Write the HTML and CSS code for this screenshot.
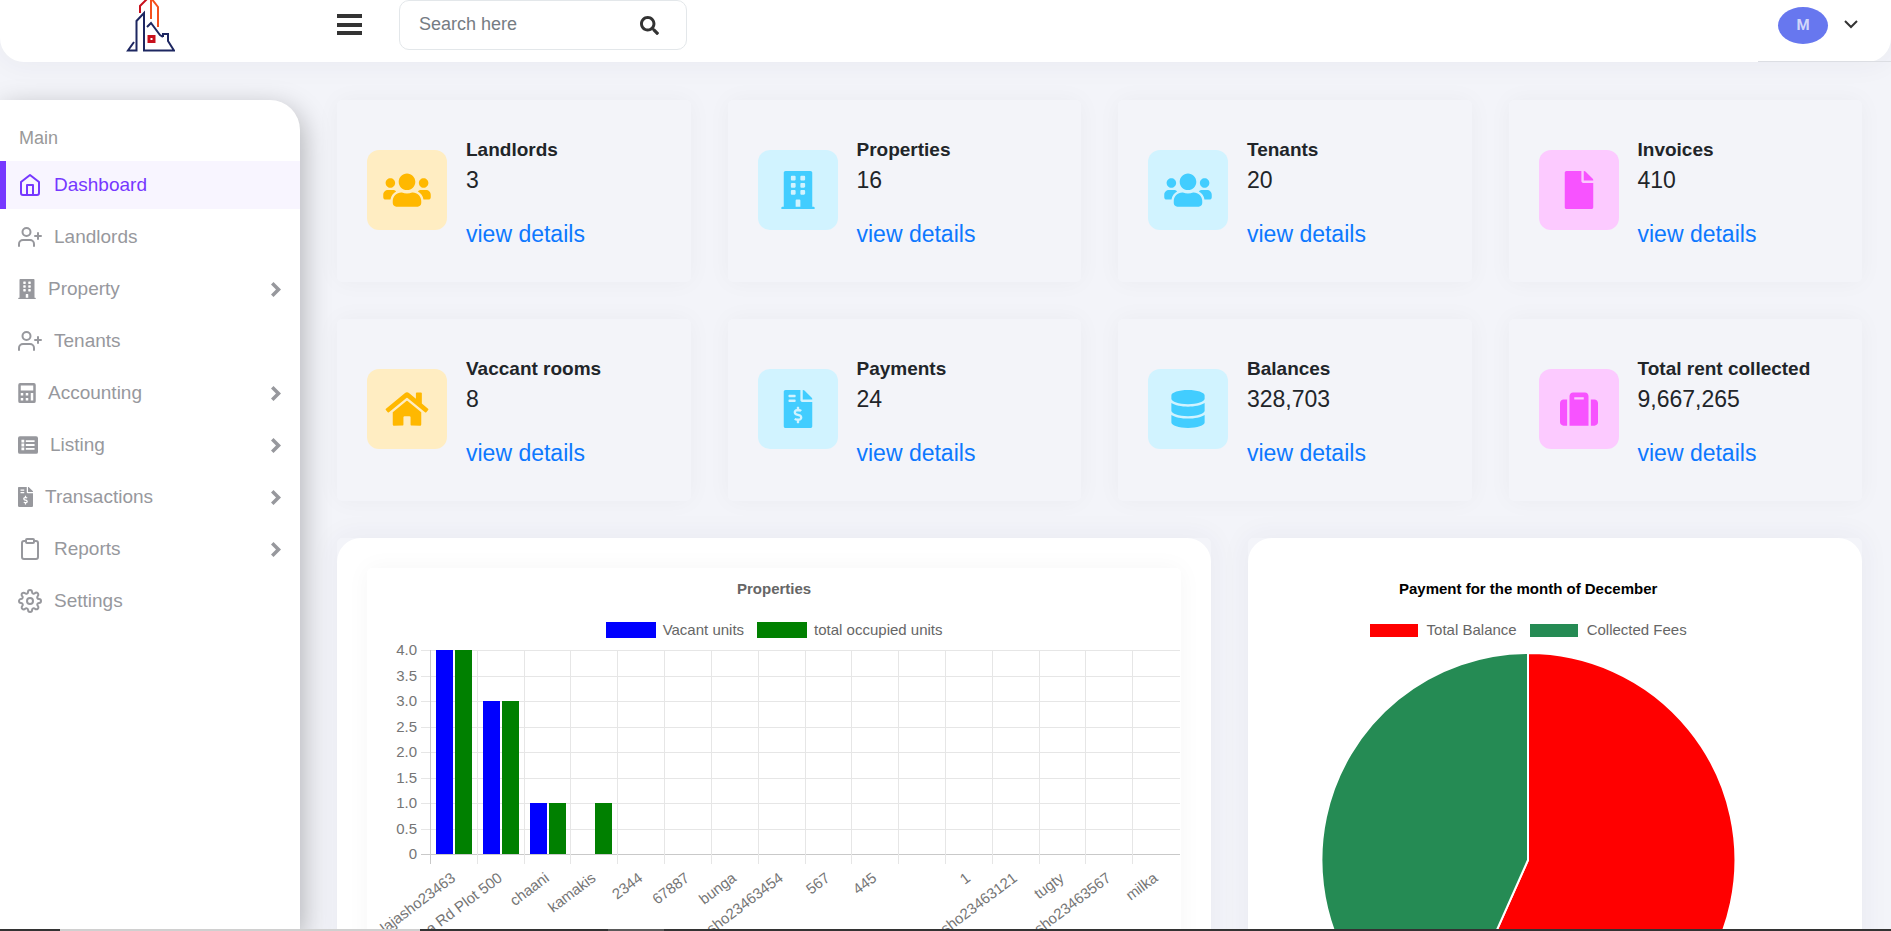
FILE: index.html
```html
<!DOCTYPE html>
<html lang="en">
	<head>
		<meta charset="utf-8">
		<title>Dashboard</title>
		<link rel="stylesheet" href="styles.css">
	</head>
	<body>

		<!-- shared icons -->
		<svg class="sprite" aria-hidden="true">
			<symbol id="home" viewBox="0 0 24 24"><path d="M3 9l9-7 9 7v11a2 2 0 0 1-2 2H5a2 2 0 0 1-2-2z"/><path d="M9 22V12h6v10"/></symbol>
			<symbol id="user-plus" viewBox="0 0 24 24"><path d="M16 21v-2a4 4 0 0 0-4-4H5a4 4 0 0 0-4 4v2"/><circle cx="8.500" cy="7" r="4"/><path d="M20 8v6M23 11h-6"/></symbol>
			<symbol id="clipboard" viewBox="0 0 24 24"><path d="M16 4h2a2 2 0 0 1 2 2v14a2 2 0 0 1-2 2H6a2 2 0 0 1-2-2V6a2 2 0 0 1 2-2h2"/><rect x="8" y="2" width="8" height="4" rx="1"/></symbol>
			<symbol id="settings" viewBox="0 0 24 24"><circle cx="12" cy="12" r="3"/><path d="M19.4 15a1.65 1.65 0 0 0 .33 1.82l.06.06a2 2 0 0 1 0 2.83 2 2 0 0 1-2.83 0l-.06-.06a1.65 1.65 0 0 0-1.82-.33 1.65 1.65 0 0 0-1 1.51V21a2 2 0 0 1-2 2 2 2 0 0 1-2-2v-.09A1.65 1.65 0 0 0 9 19.4a1.65 1.65 0 0 0-1.82.33l-.06.06a2 2 0 0 1-2.83 0 2 2 0 0 1 0-2.83l.06-.06a1.65 1.65 0 0 0 .33-1.82 1.65 1.65 0 0 0-1.51-1H3a2 2 0 0 1-2-2 2 2 0 0 1 2-2h.09A1.65 1.65 0 0 0 4.6 9a1.65 1.65 0 0 0-.33-1.82l-.06-.06a2 2 0 0 1 0-2.83 2 2 0 0 1 2.83 0l.06.06a1.65 1.65 0 0 0 1.82.33H9a1.65 1.65 0 0 0 1-1.51V3a2 2 0 0 1 2-2 2 2 0 0 1 2 2v.09a1.65 1.65 0 0 0 1 1.51 1.65 1.65 0 0 0 1.82-.33l.06-.06a2 2 0 0 1 2.83 0 2 2 0 0 1 0 2.83l-.06.06a1.65 1.65 0 0 0-.33 1.82V9a1.65 1.65 0 0 0 1.51 1H21a2 2 0 0 1 2 2 2 2 0 0 1-2 2h-.09a1.65 1.65 0 0 0-1.51 1z"/></symbol>
			<symbol id="users" viewBox="0 0 640 512"><path d="M96 224c35.3 0 64-28.7 64-64s-28.7-64-64-64-64 28.7-64 64 28.7 64 64 64zm448 0c35.3 0 64-28.7 64-64s-28.7-64-64-64-64 28.7-64 64 28.7 64 64 64zm32 32h-64c-17.6 0-33.5 7.1-45.1 18.6 40.3 22.1 68.9 62 75.1 109.4h66c17.7 0 32-14.3 32-32v-32c0-35.3-28.7-64-64-64zm-256 0c61.9 0 112-50.1 112-112S381.9 32 320 32 208 82.1 208 144s50.1 112 112 112zm76.8 32h-8.3c-20.8 10-43.9 16-68.5 16s-47.6-6-68.5-16h-8.3C179.6 288 128 339.6 128 403.2V432c0 26.5 21.5 48 48 48h288c26.5 0 48-21.5 48-48v-28.8c0-63.6-51.6-115.2-115.2-115.2zm-223.7-13.4C161.5 263.1 145.6 256 128 256H64c-35.3 0-64 28.7-64 64v32c0 17.7 14.3 32 32 32h65.9c6.3-47.4 34.9-87.3 75.2-109.4z"/></symbol>
			<symbol id="building" viewBox="0 0 448 512"><path d="M436 480h-20V24c0-13.255-10.745-24-24-24H56C42.745 0 32 10.745 32 24v456H12c-6.627 0-12 5.373-12 12v20h448v-20c0-6.627-5.373-12-12-12zM128 76c0-6.627 5.373-12 12-12h40c6.627 0 12 5.373 12 12v40c0 6.627-5.373 12-12 12h-40c-6.627 0-12-5.373-12-12V76zm0 96c0-6.627 5.373-12 12-12h40c6.627 0 12 5.373 12 12v40c0 6.627-5.373 12-12 12h-40c-6.627 0-12-5.373-12-12v-40zm52 148h-40c-6.627 0-12-5.373-12-12v-40c0-6.627 5.373-12 12-12h40c6.627 0 12 5.373 12 12v40c0 6.627-5.373 12-12 12zm76 160h-64v-84c0-6.627 5.373-12 12-12h40c6.627 0 12 5.373 12 12v84zm64-172c0 6.627-5.373 12-12 12h-40c-6.627 0-12-5.373-12-12v-40c0-6.627 5.373-12 12-12h40c6.627 0 12 5.373 12 12v40zm0-96c0 6.627-5.373 12-12 12h-40c-6.627 0-12-5.373-12-12v-40c0-6.627 5.373-12 12-12h40c6.627 0 12 5.373 12 12v40zm0-96c0 6.627-5.373 12-12 12h-40c-6.627 0-12-5.373-12-12V76c0-6.627 5.373-12 12-12h40c6.627 0 12 5.373 12 12v40z"/></symbol>
			<symbol id="file" viewBox="0 0 384 512"><path d="M224 136V0H24C10.7 0 0 10.7 0 24v464c0 13.3 10.7 24 24 24h336c13.3 0 24-10.7 24-24V160H248c-13.2 0-24-10.8-24-24zm160-14.1v6.1H256V0h6.1c6.4 0 12.5 2.5 17 7l97.9 98c4.5 4.5 7 10.6 7 16.9z"/></symbol>
			<symbol id="invoice" viewBox="0 0 384 512"><path d="M377 105L279.1 7c-4.5-4.5-10.6-7-17-7H256v128h128v-6.1c0-6.3-2.5-12.4-7-16.9zm-153 31V0H24C10.7 0 0 10.7 0 24v464c0 13.3 10.7 24 24 24h336c13.3 0 24-10.7 24-24V160H248c-13.2 0-24-10.8-24-24zM64 72c0-4.42 3.58-8 8-8h80c4.42 0 8 3.58 8 8v16c0 4.42-3.58 8-8 8H72c-4.42 0-8-3.58-8-8V72zm0 80v-16c0-4.42 3.58-8 8-8h80c4.42 0 8 3.58 8 8v16c0 4.42-3.58 8-8 8H72c-4.42 0-8-3.58-8-8zm144 263.88V440c0 4.42-3.58 8-8 8h-16c-4.42 0-8-3.58-8-8v-24.29c-11.29-.58-22.27-4.52-31.37-11.35-3.9-2.93-4.1-8.77-.57-12.14l11.75-11.21c2.77-2.64 6.89-2.76 10.13-.73 3.87 2.42 8.26 3.72 12.82 3.72h28.11c6.5 0 11.8-5.92 11.8-13.19 0-5.95-3.61-11.19-8.77-12.73l-45-13.5c-18.59-5.58-31.58-23.42-31.58-43.39 0-24.52 19.05-44.44 42.67-45.07V232c0-4.42 3.58-8 8-8h16c4.42 0 8 3.58 8 8v24.29c11.29.58 22.27 4.51 31.37 11.35 3.9 2.93 4.1 8.77.57 12.14l-11.75 11.21c-2.77 2.64-6.89 2.76-10.13.73-3.87-2.43-8.26-3.72-12.82-3.72h-28.11c-6.5 0-11.8 5.92-11.8 13.19 0 5.95 3.61 11.19 8.77 12.73l45 13.5c18.59 5.58 31.58 23.42 31.58 43.39 0 24.53-19.05 44.44-42.67 45.07z"/></symbol>
			<symbol id="house" viewBox="0 0 576 512"><path d="M280.37 148.26L96 300.11V464a16 16 0 0 0 16 16l112.06-.29a16 16 0 0 0 15.92-16V368a16 16 0 0 1 16-16h64a16 16 0 0 1 16 16v95.64a16 16 0 0 0 16 16.05L464 480a16 16 0 0 0 16-16V300L295.67 148.26a12.19 12.19 0 0 0-15.3 0zM571.6 251.47L488 182.56V44.05a12 12 0 0 0-12-12h-56a12 12 0 0 0-12 12v72.61L318.47 43a48 48 0 0 0-61 0L4.34 251.47a12 12 0 0 0-1.6 16.9l25.5 31A12 12 0 0 0 45.15 301l235.22-193.74a12.19 12.19 0 0 1 15.3 0L530.9 301a12 12 0 0 0 16.9-1.6l25.5-31a12 12 0 0 0-1.7-16.93z"/></symbol>
			<symbol id="database" viewBox="0 0 448 512"><path d="M448 73.143v45.714C448 159.143 347.667 192 224 192S0 159.143 0 118.857V73.143C0 32.857 100.333 0 224 0s224 32.857 224 73.143zM448 176v102.857C448 319.143 347.667 352 224 352S0 319.143 0 278.857V176c48.125 33.143 136.208 48.572 224 48.572S399.874 209.143 448 176zm0 160v102.857C448 479.143 347.667 512 224 512S0 479.143 0 438.857V336c48.125 33.143 136.208 48.572 224 48.572S399.874 369.143 448 336z"/></symbol>
			<symbol id="suitcase" viewBox="0 0 512 512"><path d="M128 480h256V80c0-26.5-21.5-48-48-48H176c-26.5 0-48 21.5-48 48v400zm64-384h128v32H192V96zm320 80v256c0 26.5-21.5 48-48 48h-48V128h48c26.5 0 48 21.5 48 48zM96 480H48c-26.5 0-48-21.5-48-48V176c0-26.5 21.5-48 48-48h48v352z"/></symbol>
			<symbol id="calculator" viewBox="0 0 448 512"><path fill-rule="evenodd" d="M48 0h352q48 0 48 48v416q0 48-48 48H48q-48 0-48-48V48Q0 0 48 0zM64 64v128h320V64zM64 256v64h64v-64zM64 384v64h64v-64zM192 256v64h64v-64zM192 384v64h64v-64zM320 256v192h64V256z"/></symbol>
			<symbol id="list" viewBox="0 0 512 512"><path fill-rule="evenodd" d="M48 32h416q48 0 48 48v352q0 48-48 48H48q-48 0-48-48V80q0-48 48-48zM88 120v72h72v-72zM88 220v72h72v-72zM88 320v72h72v-72zM200 132v48h224v-48zM200 232v48h224v-48zM200 332v48h224v-48z"/></symbol>
			<symbol id="chevron" viewBox="0 0 10 15"><path d="M0 2.500L2.500 0 10 7.500 2.500 15 0 12.500l5-5z"/></symbol>
		</svg>

		<header class="header">
			<a class="logo" href="#" aria-label="Home">
				<svg viewBox="125 0 50 52" width="50" height="52" fill="none" stroke-width="2">
					<path stroke="#c8101c" d="M140 13V6l8-8"/>
					<path stroke="#c8101c" stroke-width="3" d="M149 36.500h5v5h-5z"/>
					<path stroke="#f4511e" d="M151 0v19M151 -2l7 9v20"/>
					<path stroke="#1d2761" d="M134 42l-6 8.500h8.500V21l7.500-8v37.500h30L168 41v-7h-5v3"/>
					<path stroke="#1d2761" d="M147 27l4-4 9 12 3 2"/>
				</svg>
			</a>
			<button class="toggle" type="button" aria-label="Toggle menu">
				<svg viewBox="0 0 25 21" width="25" height="21"><path d="M0 0h25v4H0zM0 9h25v4H0zM0 17h25v4H0z"/></svg>
			</button>
			<form class="search">
				<input type="text" placeholder="Search here" aria-label="Search here">
				<button type="submit" aria-label="Search">
					<svg viewBox="0 0 512 512" width="19" height="19"><path d="M505 442.7L405.3 343c-4.5-4.5-10.6-7-17-7H372c27.6-35.3 44-79.7 44-128C416 93.1 322.9 0 208 0S0 93.1 0 208s93.1 208 208 208c48.3 0 92.7-16.4 128-44v16.3c0 6.400 2.500 12.500 7 17l99.7 99.7c9.400 9.400 24.600 9.400 33.900 0l28.3-28.3c9.400-9.400 9.400-24.600.1-34zM208 336c-70.7 0-128-57.2-128-128 0-70.7 57.2-128 128-128 70.7 0 128 57.2 128 128 0 70.7-57.2 128-128 128z"/></svg>
				</button>
			</form>
			<button class="user" type="button" aria-label="Account menu">
				<span class="avatar">M</span>
				<svg viewBox="0 0 14 11" width="14" height="11" fill="none" stroke="#333" stroke-width="2"><path d="M1 1l6 6 6-6"/></svg>
			</button>
		</header>

		<div class="layout">
			<nav class="sidebar">
				<div class="menu-title">Main</div>
				<ul>
					<li><a class="active" href="#"><svg class="line"><use href="#home"/></svg>Dashboard</a></li>
					<li><a href="#"><svg class="line"><use href="#user-plus"/></svg>Landlords</a></li>
					<li><a href="#"><svg class="solid"><use href="#building"/></svg>Property<svg class="arrow"><use href="#chevron"/></svg></a></li>
					<li><a href="#"><svg class="line"><use href="#user-plus"/></svg>Tenants</a></li>
					<li><a href="#"><svg class="solid"><use href="#calculator"/></svg>Accounting<svg class="arrow"><use href="#chevron"/></svg></a></li>
					<li><a href="#"><svg class="solid wide"><use href="#list"/></svg>Listing<svg class="arrow"><use href="#chevron"/></svg></a></li>
					<li><a href="#"><svg class="solid narrow"><use href="#invoice"/></svg>Transactions<svg class="arrow"><use href="#chevron"/></svg></a></li>
					<li><a href="#"><svg class="line"><use href="#clipboard"/></svg>Reports<svg class="arrow"><use href="#chevron"/></svg></a></li>
					<li><a href="#"><svg class="line"><use href="#settings"/></svg>Settings</a></li>
				</ul>
			</nav>

			<main class="content">
				<section class="card">
					<span class="icon yellow"><svg><use href="#users"/></svg></span>
					<div><h6>Landlords</h6><p>3</p><a href="#">view details</a></div>
				</section>
				<section class="card">
					<span class="icon blue"><svg><use href="#building"/></svg></span>
					<div><h6>Properties</h6><p>16</p><a href="#">view details</a></div>
				</section>
				<section class="card">
					<span class="icon blue"><svg><use href="#users"/></svg></span>
					<div><h6>Tenants</h6><p>20</p><a href="#">view details</a></div>
				</section>
				<section class="card">
					<span class="icon pink"><svg><use href="#file"/></svg></span>
					<div><h6>Invoices</h6><p>410</p><a href="#">view details</a></div>
				</section>
				<section class="card">
					<span class="icon yellow"><svg><use href="#house"/></svg></span>
					<div><h6>Vaccant rooms</h6><p>8</p><a href="#">view details</a></div>
				</section>
				<section class="card">
					<span class="icon blue"><svg><use href="#invoice"/></svg></span>
					<div><h6>Payments</h6><p>24</p><a href="#">view details</a></div>
				</section>
				<section class="card">
					<span class="icon blue"><svg><use href="#database"/></svg></span>
					<div><h6>Balances</h6><p>328,703</p><a href="#">view details</a></div>
				</section>
				<section class="card">
					<span class="icon pink"><svg><use href="#suitcase"/></svg></span>
					<div><h6>Total rent collected</h6><p>9,667,265</p><a href="#">view details</a></div>
				</section>

				<section class="panel bars">
					<div class="panel-body">
						<div class="chart framed">
							<h3>Properties</h3>
							<div class="legend">
								<span><i class="c-vacant"></i>Vacant units</span>
								<span><i class="c-occupied"></i>total occupied units</span>
							</div>
							<svg id="barChart" class="bar-chart"></svg>
						</div>
					</div>
				</section>
				<section class="panel pie">
					<div class="panel-body">
						<div class="chart pie-box">
							<h3>Payment for the month of December</h3>
							<div class="legend small">
								<span><i class="c-balance"></i>Total Balance</span>
								<span><i class="c-fees"></i>Collected Fees</span>
							</div>
							<svg class="pie-chart" viewBox="-207 -207 414 414" stroke="#fff" stroke-width="2">
								<path fill="#ff0000" d="M0 0V-207A207 207 0 1 1 -84 189z"/>
								<path fill="#258b54" d="M0 0L-84 189A207 207 0 0 1 0 -207z"/>
							</svg>
						</div>
					</div>
				</section>
			</main>
		</div>
		<div class="bottom-edge"></div>

		<script>
			var labels = ["alajasho23463", "na Rd Plot 500", "chaani", "kamakis", "2344", "67887", "bunga", "asho23463454", "567", "445", "", "1", "asho23463121", "tugty", "asho23463567", "milka"];
			var vacant = [4, 3, 1, 0];
			var occupied = [4, 3, 1, 1];

			function drawBars()
			{
				var svg = document.getElementById("barChart");
				var left = 64, top = 11, bottom = 215;
				var right = svg.clientWidth - 1;
				var step = (right - left) / labels.length;
				var out = "";

				for (var i = 0; i <= 8; i++)
				{
					var y = Math.round(bottom - i * (bottom - top) / 8);
					out += '<path class="grid' + (i == 0 ? ' axis' : '') + '" d="M' + (left - 10) + ' ' + (y + 0.5) + 'H' + right + '"/>';
					out += '<text x="' + (left - 14) + '" y="' + (y + 5) + '">' + (i == 0 ? "0" : (i / 2).toFixed(1)) + '</text>';
				}
				for (var k = 0; k < labels.length; k++)
				{
					var x = Math.round(left + k * step - 1);
					out += '<path class="grid' + (k == 0 ? ' axis' : '') + '" d="M' + (x + 0.5) + ' ' + top + 'V' + (bottom + 10) + '"/>';
					out += bar("vacant", x + 6, vacant[k], bottom, top) + bar("occupied", x + 25, occupied[k], bottom, top);
					out += '<text transform="translate(' + (left + (k + 0.5) * step - 1) + ' ' + (bottom + 22) + ') rotate(-37)" y="5">' + labels[k] + '</text>';
				}
				svg.innerHTML = out;
			}

			function bar(name, x, value, bottom, top)
			{
				if (!value)
					return "";
				var h = value * (bottom - top) / 4;
				return '<rect class="' + name + '" x="' + x + '" y="' + (bottom - h) + '" width="17" height="' + h + '"/>';
			}

			drawBars();
			window.onresize = drawBars;
		</script>
	</body>
</html>
```
FILE: styles.css
```css
*
{
	box-sizing: border-box;
}
body
{
	margin: 0;
	height: 100vh;
	overflow: hidden;
	display: flex;
	flex-direction: column;
	background: #f3f4f9;
	color: #212529;
	font-family: "Liberation Sans", Arial, sans-serif;
	font-size: 19px;
}
button
{
	border: 0;
	padding: 0;
	background: none;
	cursor: pointer;
}
a
{
	text-decoration: none;
}
.sprite
{
	display: none;
}

/* header */
.header
{
	flex: none;
	display: flex;
	align-items: flex-start;
	height: 62px;
	background: #fff;
	border-radius: 0 0 24px 24px;
	box-shadow: 0 0 30px rgba(50, 50, 80, 0.06);
}
.logo
{
	width: 300px;
	text-align: center;
}
.toggle
{
	height: 49px;
	margin-left: 37px;
	fill: #333;
}
.toggle svg,
.search svg
{
	display: block;
}
.search
{
	display: flex;
	align-items: center;
	width: 288px;
	height: 50px;
	margin-left: 37px;
	padding: 0 27px 0 19px;
	border: 1px solid #e3e7ea;
	border-radius: 10px;
	fill: #333;
}
.search input
{
	flex: 1;
	min-width: 0;
	border: 0;
	padding: 0 0 2px;
	outline: 0;
	font: 18px "Liberation Sans", Arial, sans-serif;
}
.search input::placeholder
{
	color: #757c83;
}
.user
{
	display: flex;
	align-items: center;
	gap: 16px;
	width: 133px;
	height: 62px;
	margin-left: auto;
	padding: 0 0 10px 20px;
	border-bottom: 1px solid #dcdee3;
}
.avatar
{
	width: 50px;
	height: 37px;
	border-radius: 50%;
	background: #6777ef;
	color: #d1d6fa;
	font: bold 15px/37px Roboto, sans-serif;
}

/* sidebar */
.layout
{
	flex: 1;
	display: flex;
	min-height: 0;
}
.sidebar
{
	flex: none;
	width: 300px;
	margin-top: 38px;
	padding-top: 26px;
	background: #fff;
	border-radius: 0 30px 0 0;
	box-shadow: 3px 8px 28px rgba(0, 0, 0, 0.28);
}
.menu-title
{
	padding: 0 19px 11px;
	color: #999;
	font-size: 18px;
	line-height: 24px;
}
.sidebar ul
{
	display: grid;
	gap: 4px;
	margin: 0;
	padding: 0;
	list-style: none;
}
.sidebar li a
{
	display: flex;
	align-items: center;
	gap: 12px;
	height: 48px;
	padding: 0 19px 0 12px;
	border-left: 6px solid transparent;
	color: #97989d;
}
.sidebar li a.active
{
	border-color: #7638ff;
	background: #f8f5ff;
	color: #7638ff;
}
.line
{
	width: 24px;
	height: 24px;
	fill: none;
	stroke: currentColor;
	stroke-width: 2;
	stroke-linecap: round;
	stroke-linejoin: round;
}
.solid
{
	width: 18px;
	height: 20px;
	fill: currentColor;
}
.solid.wide
{
	width: 20px;
}
.solid.narrow
{
	width: 15px;
}
.arrow
{
	width: 10px;
	height: 15px;
	margin-left: auto;
	fill: currentColor;
}

/* cards */
.content
{
	flex: 1;
	min-width: 0;
	display: grid;
	grid-template-columns: repeat(12, minmax(0, 1fr));
	align-content: start;
	gap: 37px;
	padding: 38px 29px 0 37px;
}
.card
{
	grid-column: span 3;
	display: flex;
	align-items: flex-start;
	gap: 19px;
	padding: 36px 24px 30px 30px;
	border-radius: 5px;
	box-shadow: 0 0 24px rgba(0, 0, 0, 0.04);
}
.icon
{
	flex: none;
	display: flex;
	align-items: center;
	justify-content: center;
	width: 80px;
	height: 80px;
	margin-top: 14px;
	border-radius: 12px;
}
.icon svg
{
	width: 48px;
	height: 38px;
	fill: currentColor;
}
.yellow
{
	background: #ffedc2;
	color: #ffb800;
}
.blue
{
	background: #d1f3ff;
	color: #42cdff;
}
.pink
{
	background: #fccaff;
	color: #f753ff;
}
.card h6
{
	margin: 0;
	font-size: 19px;
	line-height: 27px;
}
.card p
{
	margin: 0 0 19px;
	font-size: 23px;
	line-height: 35px;
}
.card a
{
	display: block;
	color: #0d78ff;
	font-size: 23px;
	line-height: 35px;
}

/* charts */
.panel
{
	border-radius: 5px;
	box-shadow: 0 0 30px rgba(50, 50, 100, 0.06);
}
.bars
{
	grid-column: span 7;
}
.pie
{
	grid-column: span 5;
}
.panel-body
{
	height: 100%;
	padding: 30px;
	border-radius: 24px;
	background: #fff;
}
.chart
{
	padding-top: 12px;
	color: #666;
	font-size: 15px;
}
.framed
{
	border-radius: 5px;
	box-shadow: 0 0 24px rgba(0, 0, 0, 0.04);
}
.chart h3
{
	margin: 0;
	font-size: 15px;
	line-height: 18px;
	text-align: center;
}
.pie-box
{
	max-width: 500px;
}
.pie-box h3
{
	color: #000;
}
.legend
{
	display: flex;
	justify-content: center;
	gap: 13px;
	margin-top: 23px;
	line-height: 18px;
}
.legend span
{
	display: flex;
	align-items: center;
	gap: 7px;
}
.legend i
{
	width: 50px;
	height: 16px;
}
.legend.small span
{
	gap: 9px;
}
.legend.small i
{
	width: 48px;
	height: 13px;
}
.c-vacant
{
	background: #0000ff;
}
.c-occupied
{
	background: #008000;
}
.c-balance
{
	background: #ff0000;
}
.c-fees
{
	background: #258b54;
}
.bar-chart
{
	display: block;
	width: 100%;
	height: 335px;
}
.bar-chart text
{
	fill: #757575;
	text-anchor: end;
}
.grid
{
	stroke: #e6e6e6;
}
.grid.axis
{
	stroke: #c9c9c9;
}
.vacant
{
	fill: #0000ff;
}
.occupied
{
	fill: #008000;
}
.pie-chart
{
	display: block;
	width: 414px;
	max-width: 100%;
	margin: 14px auto 0;
}

/* strip along the bottom of the window */
.bottom-edge
{
	position: fixed;
	left: 0;
	right: 0;
	bottom: 0;
	height: 2px;
	background: linear-gradient(90deg, #333 60px, #d0d0d0 60px, #d0d0d0 420px, #333 420px, #333 608px, #5a5a5a 608px, #5a5a5a 664px, #333 664px);
}
```
